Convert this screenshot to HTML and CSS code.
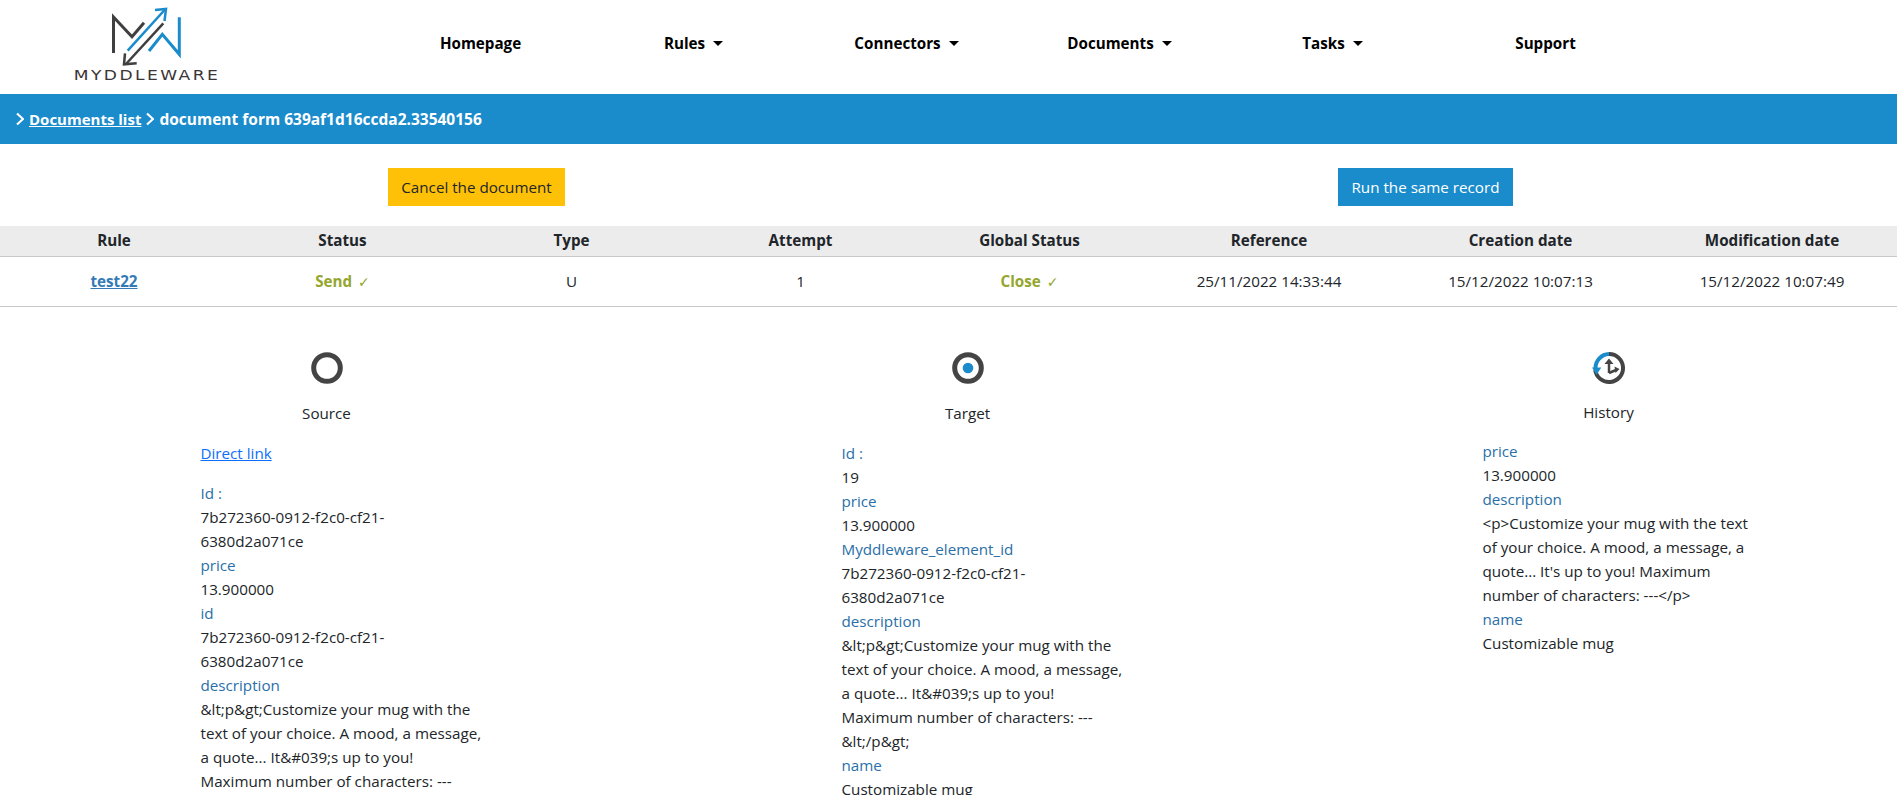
FILE: index.html
```html
<!DOCTYPE html>
<html>
<head>
    <meta charset="utf-8">
    <title>Myddleware - document form</title>
    <link rel="stylesheet" href="styles.css">
</head>
<body>

<!-- top navigation -->
<nav class="topbar">
    <a class="logo" href="#">
        <svg class="logo_mark" width="70" height="59" viewBox="0 0 70 59" fill="none">
            <path d="M1.5 46V10L20 29.7L32 15.7" stroke="#3f3f3f" stroke-width="3"/>
            <path d="M15.7 43.7L53 2.5" stroke="#1a8bcb" stroke-width="2.5"/>
            <path d="M43 3L54 2L52.500 14" stroke="#1a8bcb" stroke-width="2.5"/>
            <path d="M51.300 16.300L14 57" stroke="#3f3f3f" stroke-width="2.5"/>
            <path d="M13 46.300L12 57.300L24.700 56.300" stroke="#3f3f3f" stroke-width="2.5"/>
            <path d="M37 44L50.300 27.300L67.300 47.300V10.300" stroke="#1a8bcb" stroke-width="3"/>
        </svg>
        <span class="logo_text">MYDDLEWARE</span>
    </a>
    <ul class="menu">
        <li>Homepage</li>
        <li class="dropdown">Rules</li>
        <li class="dropdown">Connectors</li>
        <li class="dropdown">Documents</li>
        <li class="dropdown">Tasks</li>
        <li>Support</li>
    </ul>
</nav>

<!-- breadcrumb -->
<div class="breadcrumb">
    <svg class="chevron" width="8" height="14" viewBox="0 0 8 14" fill="none"><path d="M1 1.500L7 7L1 12.500" stroke="#fff" stroke-width="2.200"/></svg>
    <a class="crumb_link" href="#">Documents list</a>
    <svg class="chevron" width="8" height="14" viewBox="0 0 8 14" fill="none"><path d="M1 1.500L7 7L1 12.500" stroke="#fff" stroke-width="2.200"/></svg>
    <span>document form 639af1d16ccda2.33540156</span>
</div>

<div class="actions">
    <div class="action_cell"><button type="button" class="btn btn_cancel">Cancel the document</button></div>
    <div class="action_cell"><button type="button" class="btn btn_run">Run the same record</button></div>
</div>

<!-- document summary -->
<div class="summary summary_head">
    <div>Rule</div>
    <div>Status</div>
    <div>Type</div>
    <div>Attempt</div>
    <div>Global Status</div>
    <div>Reference</div>
    <div>Creation date</div>
    <div>Modification date</div>
</div>
<div class="summary summary_row">
    <div><a class="rule_link" href="#">test22</a></div>
    <div class="ok">Send <span class="tick">&#10003;</span></div>
    <div>U</div>
    <div>1</div>
    <div class="ok">Close <span class="tick">&#10003;</span></div>
    <div>25/11/2022 14:33:44</div>
    <div>15/12/2022 10:07:13</div>
    <div>15/12/2022 10:07:49</div>
</div>

<!-- source / target / history -->
<div class="panels">
    <section class="panel">
        <svg class="panel_icon" width="34" height="34" viewBox="0 0 34 34" fill="none">
            <circle cx="17" cy="17" r="13.300" stroke="#444" stroke-width="5"/>
        </svg>
        <h2 class="panel_title">Source</h2>
        <div class="fields">
            <a class="direct_link" href="#">Direct link</a>
            <div class="field_name">Id :</div>
            <div class="field_value">7b272360-0912-f2c0-cf21-<br>6380d2a071ce</div>
            <div class="field_name">price</div>
            <div class="field_value">13.900000</div>
            <div class="field_name">id</div>
            <div class="field_value">7b272360-0912-f2c0-cf21-<br>6380d2a071ce</div>
            <div class="field_name">description</div>
            <div class="field_value">&amp;lt;p&amp;gt;Customize your mug with the<br>text of your choice. A mood, a message,<br>a quote... It&amp;#039;s up to you!<br>Maximum number of characters: ---</div>
        </div>
    </section>

    <section class="panel">
        <svg class="panel_icon" width="34" height="34" viewBox="0 0 34 34" fill="none">
            <circle cx="17" cy="17" r="13.300" stroke="#444" stroke-width="5"/>
            <circle cx="17" cy="17" r="5.300" fill="#1a8bcb"/>
        </svg>
        <h2 class="panel_title">Target</h2>
        <div class="fields">
            <div class="field_name">Id :</div>
            <div class="field_value">19</div>
            <div class="field_name">price</div>
            <div class="field_value">13.900000</div>
            <div class="field_name">Myddleware_element_id</div>
            <div class="field_value">7b272360-0912-f2c0-cf21-<br>6380d2a071ce</div>
            <div class="field_name">description</div>
            <div class="field_value">&amp;lt;p&amp;gt;Customize your mug with the<br>text of your choice. A mood, a message,<br>a quote... It&amp;#039;s up to you!<br>Maximum number of characters: ---<br>&amp;lt;/p&amp;gt;</div>
            <div class="field_name">name</div>
            <div class="field_value">Customizable mug</div>
        </div>
    </section>

    <section class="panel panel_history">
        <svg class="panel_icon" width="34" height="34" viewBox="0 0 34 34" fill="none">
            <path d="M17 3A14 14 0 1 1 3.200 19" stroke="#444" stroke-width="4"/>
            <path d="M3.500 17A14 14 0 0 1 17 3" stroke="#1a8bcb" stroke-width="4"/>
            <path d="M0 16.500H9.300L4.500 23.700Z" fill="#1a8bcb"/>
            <path d="M17 22V11" stroke="#444" stroke-width="2.500"/>
            <path d="M12.500 13L17 7.500L21.500 13Z" fill="#444"/>
            <path d="M17 22L24 19" stroke="#444" stroke-width="2.500"/>
            <path d="M22.500 15.500L27.500 18L23.500 22Z" fill="#444"/>
        </svg>
        <h2 class="panel_title">History</h2>
        <div class="fields">
            <div class="field_name">price</div>
            <div class="field_value">13.900000</div>
            <div class="field_name">description</div>
            <div class="field_value">&lt;p&gt;Customize your mug with the text<br>of your choice. A mood, a message, a<br>quote... It's up to you! Maximum<br>number of characters: ---&lt;/p&gt;</div>
            <div class="field_name">name</div>
            <div class="field_value">Customizable mug</div>
        </div>
    </section>
</div>

</body>
</html>
```

FILE: styles.css
```css
html, body {
    height: 100%;
    overflow: hidden;
}

body {
    margin: 0;
    background-color: #fff;
    color: #212529;
    font-family: "Open Sans", sans-serif;
    font-size: 15.2px;
    line-height: 24px;
}

a {
    color: inherit;
}

/* top navigation */
.topbar {
    display: flex;
    height: 94px;
}

.logo {
    display: flex;
    flex-direction: column;
    align-items: center;
    width: 146px;
    margin-left: 74px;
    padding-top: 7px;
    text-decoration: none;
}

.logo_text {
    color: #3a3536;
    font-family: "DejaVu Sans", sans-serif;
    font-size: 14px;
    line-height: 18px;
    letter-spacing: 2px;
    transform: scaleX(1.22);
}

.menu {
    display: grid;
    grid-template-columns: repeat(6, 213px);
    margin: 0 0 0 154px;
    padding: 0;
    list-style: none;
    color: #000;
    font-weight: 700;
    line-height: 86px;
    text-align: center;
}

.dropdown::after {
    content: "";
    display: inline-block;
    margin-left: 8px;
    vertical-align: 3px;
    border-top: 5px solid #000;
    border-left: 5px solid transparent;
    border-right: 5px solid transparent;
}

/* breadcrumb */
.breadcrumb {
    display: flex;
    align-items: center;
    gap: 5px;
    height: 50px;
    padding-left: 16px;
    background-color: #1a8bcb;
    color: #fff;
    font-size: 15.5px;
    font-weight: 700;
}

.crumb_link {
    font-size: 15px;
}

/* buttons */
.actions {
    display: flex;
    height: 58px;
    padding: 24px 0 0 2px;
}

.action_cell {
    flex: none;
    width: 949px;
    text-align: center;
}

.btn {
    height: 38px;
    padding: 0 13px;
    border: 0;
    color: #212529;
    font-family: inherit;
    font-size: 15.2px;
}

.btn_cancel {
    background-color: #ffc107;
}

.btn_run {
    background-color: #1a8bcb;
    color: #fff;
}

/* summary table */
.summary {
    display: grid;
    grid-template-columns: 228px 229px 229px 229px 229px 250px 253px 250px;
    text-align: center;
}

.summary_head {
    height: 30px;
    line-height: 29px;
    background-color: #ececec;
    border-bottom: 1px solid #c8c8c8;
    font-weight: 700;
}

.summary_row {
    height: 49px;
    line-height: 49px;
    border-bottom: 1px solid #c8c8c8;
}

.rule_link {
    color: #337ab7;
    font-weight: 700;
}

.ok {
    color: #94a62d;
    font-weight: 700;
}

.tick {
    margin-left: 2px;
    font-family: "DejaVu Sans", sans-serif;
    font-size: 14px;
    font-weight: 400;
}

/* panels */
.panels {
    display: grid;
    grid-template-columns: repeat(3, 641px);
    padding-left: 6px;
}

.panel {
    display: flex;
    flex-direction: column;
    align-items: center;
    padding-top: 44px;
}

.panel_icon {
    display: block;
    overflow: visible;
}

.panel_title {
    margin: 16px 0 0;
    font-size: 15.2px;
    font-weight: 400;
    line-height: 24px;
}

.panel_history .panel_title {
    margin-top: 15px;
}

.fields {
    width: 290px;
    margin: 16px 0 0 38px;
}

.panel_history .fields {
    margin-top: 15px;
}

.direct_link {
    display: block;
    margin-bottom: 16px;
    color: #0d6efd;
}

.field_name {
    color: #2a6fa8;
}
```
